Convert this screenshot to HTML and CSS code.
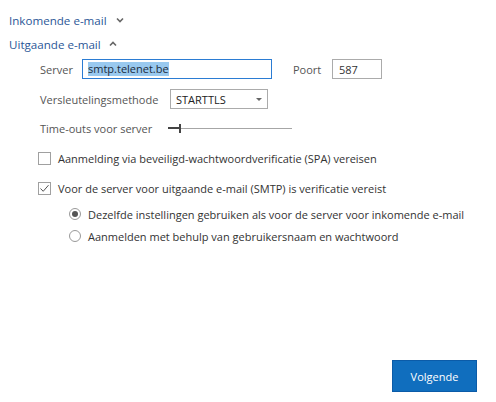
FILE: index.html
```html
<!DOCTYPE html>
<html lang="nl">
<head>
<meta charset="utf-8">
<title>Uitgaande e-mail</title>
<link rel="stylesheet" href="styles.css">
</head>
<body>
<div class="page">
  <div class="section-head first">
    <span>Inkomende e-mail</span>
    <svg class="chev down" width="8" height="6" viewBox="0 0 8 6"><path d="M1 1.5 L4 4.5 L7 1.5" fill="none" stroke="#666" stroke-width="1.6"/></svg>
  </div>
  <div class="section-head second">
    <span>Uitgaande e-mail</span>
    <svg class="chev up" width="8" height="6" viewBox="0 0 8 6"><path d="M1 4.5 L4 1.5 L7 4.5" fill="none" stroke="#666" stroke-width="1.6"/></svg>
  </div>

  <div class="form">
    <div class="row row-server">
      <label class="lbl lbl-server">Server</label>
      <div class="input input-server focused"><span class="sel">smtp.telenet.be</span></div>
      <label class="lbl lbl-port">Poort</label>
      <div class="input input-port">587</div>
    </div>
    <div class="row row-enc">
      <label class="lbl lbl-enc">Versleutelingsmethode</label>
      <div class="select"><span>STARTTLS</span><span class="arrow"></span></div>
    </div>
    <div class="row row-timeout">
      <label class="lbl lbl-timeout">Time-outs voor server</label>
      <div class="slider"><span class="fill"></span><span class="thumb"></span></div>
    </div>

    <div class="check-row cb1">
      <span class="box"></span>
      <span class="txt">Aanmelding via beveiligd-wachtwoordverificatie (SPA) vereisen</span>
    </div>
    <div class="check-row cb2">
      <span class="box checked">
        <svg width="11" height="11" viewBox="0 0 11 11"><path d="M1.5 5.5 L4.2 8.3 L9.5 2.2" fill="none" stroke="#555" stroke-width="1"/></svg>
      </span>
      <span class="txt">Voor de server voor uitgaande e-mail (SMTP) is verificatie vereist</span>
    </div>
    <div class="radio-row r1">
      <span class="radio on"><span class="dot"></span></span>
      <span class="txt">Dezelfde instellingen gebruiken als voor de server voor inkomende e-mail</span>
    </div>
    <div class="radio-row r2">
      <span class="radio"></span>
      <span class="txt">Aanmelden met behulp van gebruikersnaam en wachtwoord</span>
    </div>
  </div>

  <div class="footer">
    <button class="btn">Volgende</button>
  </div>
</div>
</body>
</html>
```

FILE: styles.css
```css
html, body {
  margin: 0;
  padding: 0;
  background: #ffffff;
}
body {
  font-family: "Open Sans", "Noto Sans", "Liberation Sans", sans-serif;
  font-size: 11px;
  color: #444;
}
.page {
  height: 402px;
  display: flex;
  flex-direction: column;
  box-sizing: border-box;
  padding-top: 10px;
}
.section-head {
  display: flex;
  align-items: center;
  height: 20px;
  padding-left: 9px;
  color: #2b5797;
  font-size: 11.6px;
  gap: 9px;
}
.section-head.second {
  margin-top: 4px;
  gap: 8px;
}
.chev { display: block; }
.form {
  display: flex;
  flex-direction: column;
  padding-left: 40px;
  margin-top: 5px;
}
.row {
  display: flex;
  align-items: center;
  height: 20px;
}
.lbl { color: #555; white-space: nowrap; }
.lbl-server { width: 42px; }
.lbl-port { width: 39px; margin-left: 21px; }
.lbl-enc { width: 130px; }
.lbl-timeout { width: 128px; }
.input {
  box-sizing: border-box;
  height: 20px;
  border: 1px solid #ababab;
  display: flex;
  align-items: center;
  padding-left: 5px;
  color: #333;
}
.input-server { width: 190px; }
.input-server.focused { border-color: #2b7cd3; }
.input-port { width: 50px; padding-left: 6px; }
.sel {
  background: #99c9ef;
  color: #1c2b3a;
  line-height: 14px;
}
.row-enc { margin-top: 10px; }
.select {
  box-sizing: border-box;
  width: 98px;
  height: 20px;
  border: 1px solid #ababab;
  display: flex;
  align-items: center;
  justify-content: space-between;
  padding: 0 5px 0 5px;
  color: #222;
}
.arrow {
  width: 0;
  height: 0;
  border-left: 3.5px solid transparent;
  border-right: 3.5px solid transparent;
  border-top: 3.5px solid #666;
  margin-top: 1px;
}
.row-timeout { margin-top: 9px; }
.slider {
  position: relative;
  width: 124px;
  height: 1px;
  background: #a6a6a6;
  margin-left: 0;
}
.slider .fill {
  position: absolute;
  left: 0;
  top: -0.5px;
  width: 11px;
  height: 2px;
  background: #444;
}
.slider .thumb {
  position: absolute;
  left: 11px;
  top: -4px;
  width: 2px;
  height: 9px;
  background: #444;
}
.check-row, .radio-row {
  display: flex;
  align-items: center;
  height: 20px;
  color: #333;
  white-space: nowrap;
}
.check-row { margin-left: -2px; gap: 7px; }
.cb1 { margin-top: 10px; }
.cb2 { margin-top: 10px; }
.box {
  box-sizing: border-box;
  width: 13px;
  height: 13px;
  border: 1px solid #a0a0a0;
  background: #fff;
  display: flex;
  align-items: center;
  justify-content: center;
  flex: none;
}
.radio-row { margin-left: 29px; gap: 7px; }
.r1 { margin-top: 6px; }
.r2 { margin-top: 2px; }
.radio {
  box-sizing: border-box;
  width: 12px;
  height: 12px;
  border: 1px solid #999;
  border-radius: 50%;
  display: flex;
  align-items: center;
  justify-content: center;
  flex: none;
}
.radio .dot {
  width: 6px;
  height: 6px;
  border-radius: 50%;
  background: #555;
}
.footer {
  margin-top: auto;
  display: flex;
  justify-content: flex-end;
  padding: 0 19px 10px 0;
}
.btn {
  width: 85px;
  height: 32px;
  background: #106ebe;
  border: 1px solid #0b5ba8;
  color: #fff;
  font-family: "Open Sans", "Noto Sans", "Liberation Sans", sans-serif;
  font-size: 11px;
  padding: 0;
}
```
